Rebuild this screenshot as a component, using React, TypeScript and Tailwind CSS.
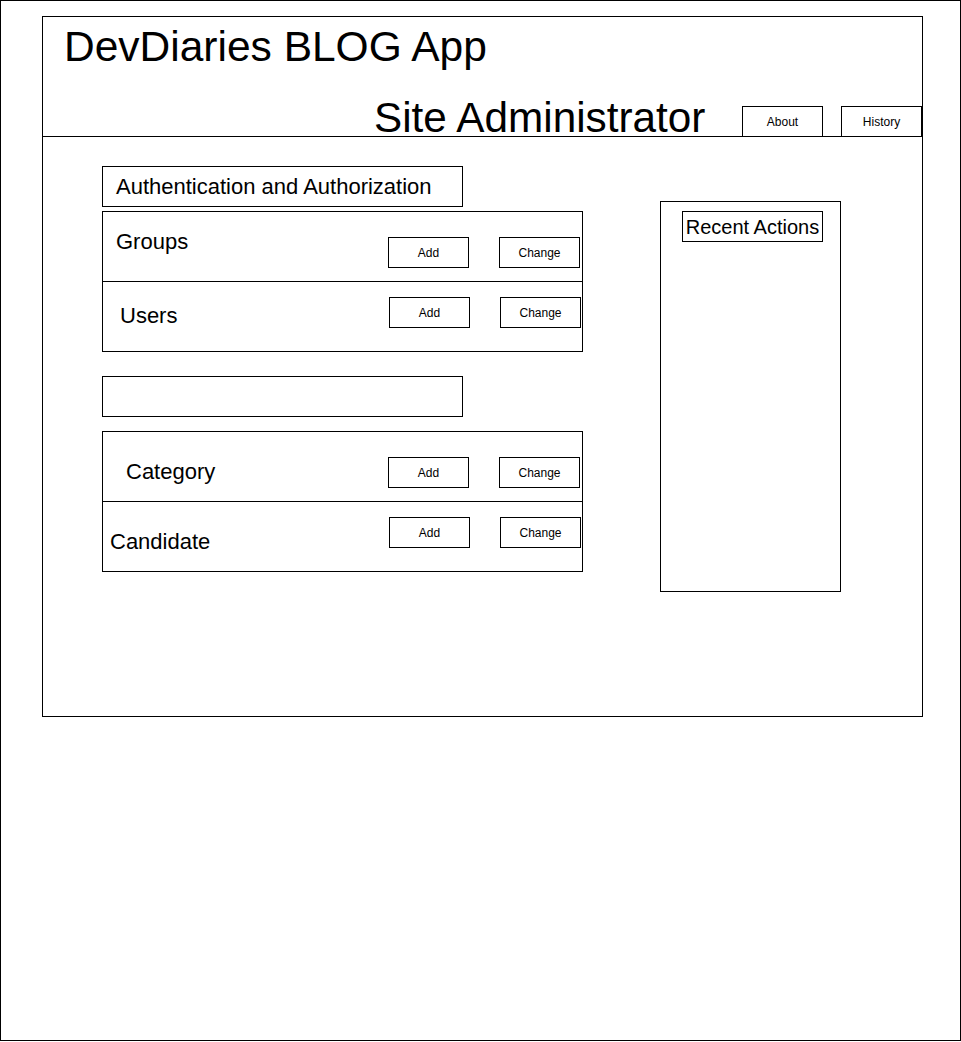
const rows1 = [
  { label: 'Groups', pl: 'pl-[13px]', textTop: 'mt-[19px]', btnTop: 'mt-[25px]', pr: 'pr-[2px]' },
  { label: 'Users', pl: 'pl-[17px]', textTop: 'mt-[23px]', btnTop: 'mt-[15px]', pr: 'pr-[1px]' },
];

const rows2 = [
  { label: 'Category', pl: 'pl-[23px]', textTop: 'mt-[29px]', btnTop: 'mt-[25px]', pr: 'pr-[2px]' },
  { label: 'Candidate', pl: 'pl-[7px]', textTop: 'mt-[29px]', btnTop: 'mt-[15px]', pr: 'pr-[1px]' },
];

type Row = { label: string; pl: string; textTop: string; btnTop: string; pr: string };

function SmallButton({ children }: { children: string }) {
  return (
    <div className="w-[81px] h-[31px] border border-black flex items-center justify-center text-[12px] leading-[12px] text-black">
      {children}
    </div>
  );
}

function ModelBox({ rows }: { rows: Row[] }) {
  return (
    <div className="w-[481px] h-[141px] border border-black flex flex-col">
      {rows.map((row, i) => (
        <div
          key={row.label}
          className={`flex justify-between ${row.pl} ${row.pr} ${
            i === 0 ? 'h-[70px] border-b border-black' : 'h-[69px]'
          }`}
        >
          <div className={`${row.textTop} text-[22px] leading-[22px]`}>{row.label}</div>
          <div className={`${row.btnTop} flex gap-[30px]`}>
            <SmallButton>Add</SmallButton>
            <SmallButton>Change</SmallButton>
          </div>
        </div>
      ))}
    </div>
  );
}

export default function App() {
  return (
    <div className="w-[961px] h-[1041px] border border-black bg-white text-black font-['Liberation_Sans',Arial,sans-serif]">
      <div className="ml-[41px] mt-[15px] w-[881px] h-[701px] border border-black">
        {/* header */}
        <div className="h-[120px] border-b border-black flex flex-col">
          <div className="mt-[9px] pl-[21px] text-[42.5px] leading-[42px]">DevDiaries BLOG App</div>
          <div className="mt-auto flex items-end">
            <div className="ml-[331px] text-[42.3px] leading-[36px]">Site Administrator</div>
            <div className="ml-auto flex gap-[18px]">
              <div className="w-[81px] h-[30px] border-t border-l border-r border-black flex items-center justify-center text-[12px] leading-[12px]">
                About
              </div>
              <div className="w-[81px] h-[30px] border-t border-l border-r border-black flex items-center justify-center text-[12px] leading-[12px]">
                History
              </div>
            </div>
          </div>
        </div>

        {/* body */}
        <div className="flex items-start">
          <div className="ml-[59px] mt-[29px] flex flex-col">
            <div className="w-[361px] h-[41px] border border-black flex items-center pl-[13px] text-[22px] leading-[22px]">
              Authentication and Authorization
            </div>
            <div className="mt-[4px]">
              <ModelBox rows={rows1} />
            </div>
            <div className="mt-[24px] w-[361px] h-[41px] border border-black" />
            <div className="mt-[14px]">
              <ModelBox rows={rows2} />
            </div>
          </div>

          <div className="ml-[77px] mt-[64px] w-[181px] h-[391px] border border-black pt-[9px] pl-[21px]">
            <div className="w-[141px] h-[31px] border border-black flex items-center justify-center text-[20px] leading-[20px]">
              Recent Actions
            </div>
          </div>
        </div>
      </div>
    </div>
  );
}
